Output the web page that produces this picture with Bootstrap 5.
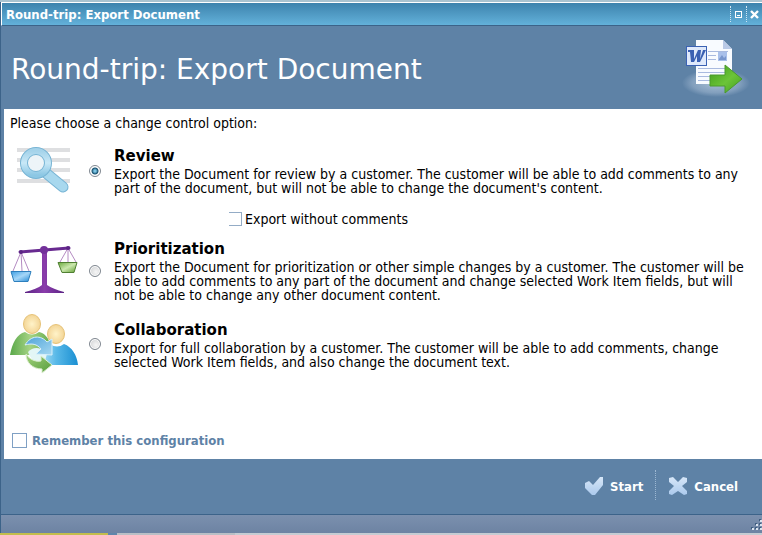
<!DOCTYPE html>
<html lang="en">
<head>
<meta charset="utf-8">
<meta name="viewport" content="width=device-width, initial-scale=1">
<title>Round-trip: Export Document</title>
<link href="https://cdn.jsdelivr.net/npm/bootstrap@5.3.0/dist/css/bootstrap.min.css" rel="stylesheet">
<style>
  body { font-family: "DejaVu Sans Condensed", "DejaVu Sans", Verdana, sans-serif; font-size: 14px; line-height: 14px; color: #000; background: #a9c3d0; }
  .dialog { background: #5e82a6; border-left: 1px solid #3c6389; margin-top: 2px; }
  .title-bar { height: 24px; background: linear-gradient(#3d83ad, #63b1da); border-top: 1px solid #fff; border-left: 1px solid #fff; border-bottom: 1px solid #3c6389; color: #fff; }
  .title-text { font-size: 13px; font-weight: bold; padding: 1px 0 0 4px; }
  .win-btn { width: 16px; height: 16px; padding: 0; border: 0; border-left: 1px dotted #cfe6f4; background: none; color: #fff; }
  .banner { height: 83px; color: #fff; padding: 0 10px; }
  .banner h1 { font-family: "DejaVu Sans", Verdana, sans-serif; font-size: 28px; line-height: 34px; padding-top: 4px; }
  .content-pane { background: #fff; margin-left: 3px; padding: 7px 12px 11px 6px; }
  .option { display: grid; grid-template-columns: 79px 25px 1fr; align-items: center; }
  .option-last { margin-top: 12px; }
  .option-icon { width: 68px; }
  .option-title { font-family: "DejaVu Sans", Verdana, sans-serif; font-size: 15px; line-height: 20px; padding-bottom: 1px; font-weight: bold; }
  .option-radio.form-check-input { width: 12px; height: 12px; margin: 0; border: 1px solid #7f8790; background: radial-gradient(circle at 60% 60%, #f6f6f6, #c9cbcd); box-shadow: inset 0 0 0 1px #fff; }
  .option-radio.form-check-input:checked { background: radial-gradient(circle, #7cc5e4 0 1px, #17506f 3px, #fff 4px); }
  .no-comments { margin: 17px 0 13px 219px; column-gap: 3px; }
  .no-comments-check.form-check-input { width: 13px; height: 14px; margin: 0; border: 1px solid #94acc6; border-left: 0; border-radius: 0; }
  .remember { padding-left: 2px; column-gap: 5px; }
  .remember-check.form-check-input { width: 15px; height: 15px; margin: 0; border: 1px solid #7fa0c4; border-radius: 0; }
  .remember-text { color: #5e82a6; font-size: 13px; font-weight: bold; }
  .actions { height: 55px; padding-right: 24px; }
  .action-btn { font-size: 13px; line-height: 14px; font-weight: bold; color: #fff; border: 0; background: none; padding: 0; column-gap: 6px; }
  .action-split { height: 30px; border-left: 1px dotted #9db8d2; margin: 0 12px 4px; }
  .status-strip { height: 19px; border-top: 1px solid #3c6389; background: linear-gradient(#7b90ae, #6d83a3); }
  .under-strip { height: 2px; background: linear-gradient(90deg, #c3bd4c 108px, #5f86ab 108px 117px, #b9bfc6 117px 235px, #c5ccd3 235px); }
</style>
</head>
<body class="d-flex flex-column min-vh-100">
<main class="dialog d-flex flex-column flex-grow-1">
  <header>
    <div class="title-bar d-flex align-items-center">
      <span class="title-text me-auto">Round-trip: Export Document</span>
      <button type="button" class="win-btn d-flex align-items-center justify-content-center" aria-label="Restore">
        <svg width="9" height="9" viewBox="0 0 9 9" fill="none" stroke="#fff" shape-rendering="crispEdges"><path d="M1.500 1.500H7.500V7.500H1.500ZM3 5.500H6"/></svg>
      </button>
      <button type="button" class="win-btn d-flex align-items-center justify-content-center" aria-label="Close">
        <svg width="9" height="9" viewBox="0 0 9 9" stroke="#fff" stroke-width="2.400"><path d="M1 1L8 8M8 1L1 8"/></svg>
      </button>
    </div>
    <div class="banner d-flex align-items-center justify-content-between">
      <h1 class="fw-normal m-0">Round-trip: Export Document</h1>
      <svg width="70" height="62" viewBox="0 0 70 62" aria-hidden="true">
        <defs>
          <radialGradient id="glow"><stop offset="0" stop-color="#a9bfd5"/><stop offset=".7" stop-color="#829fbd"/><stop offset="1" stop-color="#5e82a6"/></radialGradient>
          <linearGradient id="arrow" x2="1" y2="1"><stop offset="0" stop-color="#3f9c1c"/><stop offset=".55" stop-color="#6cc438"/><stop offset="1" stop-color="#44a020"/></linearGradient>
        </defs>
        <ellipse cx="34" cy="46" rx="34" ry="14" fill="url(#glow)"/>
        <path d="M14 3H41L50 12V47H14Z" fill="#f8fbff"/>
        <path d="M41 3V12H50Z" fill="#b9c9e6"/>
        <path d="M26 14.500H46M26 18.500H34M26 22.500H34M16 31.500H46M16 35.500H46M16 39.500H29M16 43.500H29" stroke="#a9badf"/>
        <rect x="36" y="15" width="9" height="9" fill="#a9c0ea"/><path d="M37 22l3-4 2 3 2-2v4h-7z" fill="#7896cd"/>
        <rect x="4.500" y="9.500" width="20" height="19" fill="#dfe9fb" stroke="#3b62b4"/>
        <path d="M6 13H12L12 22L16 13H19L18 22L21 13H24L18 25H15L15 19L12 25H9L8 15H6Z" fill="#3a60b2"/>
        <path d="M28 38H43V28L60 42L43 56V49H28Z" fill="url(#arrow)" stroke="#4a9a2c"/>
      </svg>
    </div>
  </header>

  <form class="d-flex flex-column flex-grow-1">
    <div class="content-pane d-flex flex-column flex-grow-1">
      <p class="mb-3">Please choose a change control option:</p>

      <div class="option">
        <svg class="option-icon" height="48" viewBox="0 0 68 48" aria-hidden="true">
          <defs><linearGradient id="lens" x2="0" y2="1"><stop offset="0" stop-color="#a5d3ea"/><stop offset=".5" stop-color="#c8e8f7"/><stop offset="1" stop-color="#8cc7e4"/></linearGradient></defs>
          <path d="M7 3H60M7 13H60M7 23H60M7 34H60" stroke="#dedfe1" stroke-width="4"/>
          <path d="M36 26L53 40" stroke="#77b4d4" stroke-width="11" stroke-linecap="round"/>
          <path d="M36 26L53 40" stroke="#a8d8ee" stroke-width="9" stroke-linecap="round"/>
          <circle cx="26" cy="16" r="12" fill="#edf4f8" stroke="#77b4d4" stroke-width="8"/>
          <circle cx="26" cy="16" r="12" fill="none" stroke="url(#lens)" stroke-width="6"/>
        </svg>
        <input class="option-radio form-check-input" type="radio" name="mode" id="review" checked>
        <label for="review"><span class="option-title d-block">Review</span>Export the Document for review by a customer. The customer will be able to add comments to any part of the document, but will not be able to change the document's content.</label>
      </div>
      <div class="no-comments d-flex align-items-center">
        <input class="no-comments-check form-check-input" type="checkbox" id="plain">
        <label for="plain">Export without comments</label>
      </div>

      <div class="option">
        <svg class="option-icon" height="52" viewBox="0 3 68 52" aria-hidden="true">
          <defs>
            <linearGradient id="bluePan" x2="1" y2="1"><stop offset="0" stop-color="#3e9fe4"/><stop offset=".5" stop-color="#a5d6f8"/><stop offset="1" stop-color="#2288d4"/></linearGradient>
            <linearGradient id="greenPan" x2="1" y2="1"><stop offset="0" stop-color="#69a93b"/><stop offset=".5" stop-color="#cbe7ae"/><stop offset="1" stop-color="#5e9d2f"/></linearGradient>
            <linearGradient id="post"><stop offset="0" stop-color="#5c2485"/><stop offset=".5" stop-color="#8a3cab"/><stop offset="1" stop-color="#5c2485"/></linearGradient>
          </defs>
          <path d="M11 10L3 29M11 10L12 29M11 10L19 29M58 6L50 20M58 6L58 20M58 6L66 20" stroke="#b48bc2" fill="none"/>
          <path d="M32 9H37V43Q43 47 54 50V51H15V50Q27 47 32 43Z" fill="url(#post)"/>
          <path d="M10 10L59 6" stroke="#682a90" stroke-width="3" stroke-linecap="round"/>
          <circle cx="34" cy="8" r="4" fill="#73309a"/><circle cx="11" cy="10" r="2" fill="#5c2485"/><circle cx="58" cy="6" r="2" fill="#5c2485"/>
          <path d="M1 29.500H21L18 39.500H4Z" fill="url(#bluePan)" stroke="#2d7fbd" stroke-linejoin="round"/>
          <path d="M48 20.500H67L64 30.500H52Z" fill="url(#greenPan)" stroke="#507f32" stroke-linejoin="round"/>
        </svg>
        <input class="option-radio form-check-input" type="radio" name="mode" id="priority">
        <label for="priority"><span class="option-title d-block">Prioritization</span>Export the Document for prioritization or other simple changes by a customer. The customer will be able to add comments to any part of the document and change selected Work Item fields, but will not be able to change any other document content.</label>
      </div>

      <div class="option option-last">
        <svg class="option-icon" height="60" viewBox="0 2 68 60" aria-hidden="true">
          <defs>
            <radialGradient id="face"><stop offset="0" stop-color="#fff3c9"/><stop offset="1" stop-color="#f3d596"/></radialGradient>
            <linearGradient id="greenCoat" x2="1" y2="0"><stop offset="0" stop-color="#5aa84a"/><stop offset=".5" stop-color="#a5d384"/><stop offset="1" stop-color="#6aae50"/></linearGradient>
            <linearGradient id="blueCoat" x2="1" y2="0"><stop offset="0" stop-color="#d6f2fb"/><stop offset=".5" stop-color="#59b9e8"/><stop offset="1" stop-color="#1a8fd2"/></linearGradient>
            <linearGradient id="turnBlue" x2="1" y2="1"><stop offset="0" stop-color="#4fa3d8"/><stop offset="1" stop-color="#a5d8f2"/></linearGradient>
            <linearGradient id="turnGreen" x2="1" y2="1"><stop offset="0" stop-color="#a4d27c"/><stop offset="1" stop-color="#559c3c"/></linearGradient>
          </defs>
          <path d="M0 43C2 31 7 22 15 20Q22 25 29 20C34 21 38 25 40 31V43Z" fill="url(#greenCoat)"/>
          <path d="M24 51C27 39 33 36 40 32Q47 37 54 32C62 35 67 43 68 53H24Z" fill="url(#blueCoat)"/>
          <ellipse cx="22" cy="12" rx="8.500" ry="9.500" fill="url(#face)" stroke="#e6c277"/>
          <ellipse cx="46" cy="22" rx="8.500" ry="9.500" fill="url(#face)" stroke="#e6c277"/>
          <path d="M18 40C23 35 30 34 37 42L34 52C27 53 21 48 18 40Z" fill="#e3f6f6"/>
          <path d="M15 33C21 23 31 23 37 30L42 27V43L26 42L31 37C27 32 22 31 15 33Z" fill="url(#turnBlue)" stroke="#d7effb"/>
          <path d="M16 42C20 48 26 50 31 49V44L42 53L32 61V57C23 57 16 51 16 42Z" fill="url(#turnGreen)" stroke="#dceecf"/>
        </svg>
        <input class="option-radio form-check-input" type="radio" name="mode" id="collab">
        <label for="collab"><span class="option-title d-block">Collaboration</span>Export for full collaboration by a customer. The customer will be able to add comments, change selected Work Item fields, and also change the document text.</label>
      </div>

      <div class="remember d-flex align-items-center mt-auto">
        <input class="remember-check form-check-input" type="checkbox" id="remember">
        <label class="remember-text" for="remember">Remember this configuration</label>
      </div>
    </div>

    <div class="actions d-flex align-items-center justify-content-end">
      <button type="submit" class="action-btn d-flex align-items-center">
        <svg width="19" height="20" viewBox="0 1 19 20" aria-hidden="true"><defs><linearGradient id="ice" gradientUnits="userSpaceOnUse" x1="0" y1="0" x2="0" y2="20"><stop offset="0" stop-color="#d9e8f8"/><stop offset="1" stop-color="#a9c8ec"/></linearGradient></defs><path d="M0 7L4 5L8 9L15 1L18 1V9L10 19H7L0 12Z" fill="url(#ice)"/></svg>Start
      </button>
      <span class="action-split"></span>
      <button type="button" class="action-btn d-flex align-items-center">
        <svg width="20" height="20" viewBox="0 1 20 20" aria-hidden="true"><path d="M1 2L5 1L10 6L15 1L19 2V6L14 10L19 15V18L16 19L10 15L4 19L1 18V15L6 10L1 6Z" fill="url(#ice)"/></svg>Cancel
      </button>
    </div>
  </form>
  <footer class="status-strip d-flex justify-content-end align-items-end">
    <svg width="13" height="14" viewBox="0 0 13 14" aria-hidden="true"><path d="M10 0h2v2h-2zM6 4h2v2H6zM10 4h2v2h-2zM2 8h2v2H2zM6 8h2v2H6zM10 8h2v2h-2z" fill="#3f5d80"/><path d="M11 1h2v2h-2zM7 5h2v2H7zM11 5h2v2h-2zM3 9h2v2H3zM7 9h2v2H7zM11 9h2v2h-2z" fill="#dbe4ee"/></svg>
  </footer>
</main>
<div class="under-strip"></div>
<script src="https://cdn.jsdelivr.net/npm/bootstrap@5.3.0/dist/js/bootstrap.bundle.min.js"></script>
</body>
</html>
